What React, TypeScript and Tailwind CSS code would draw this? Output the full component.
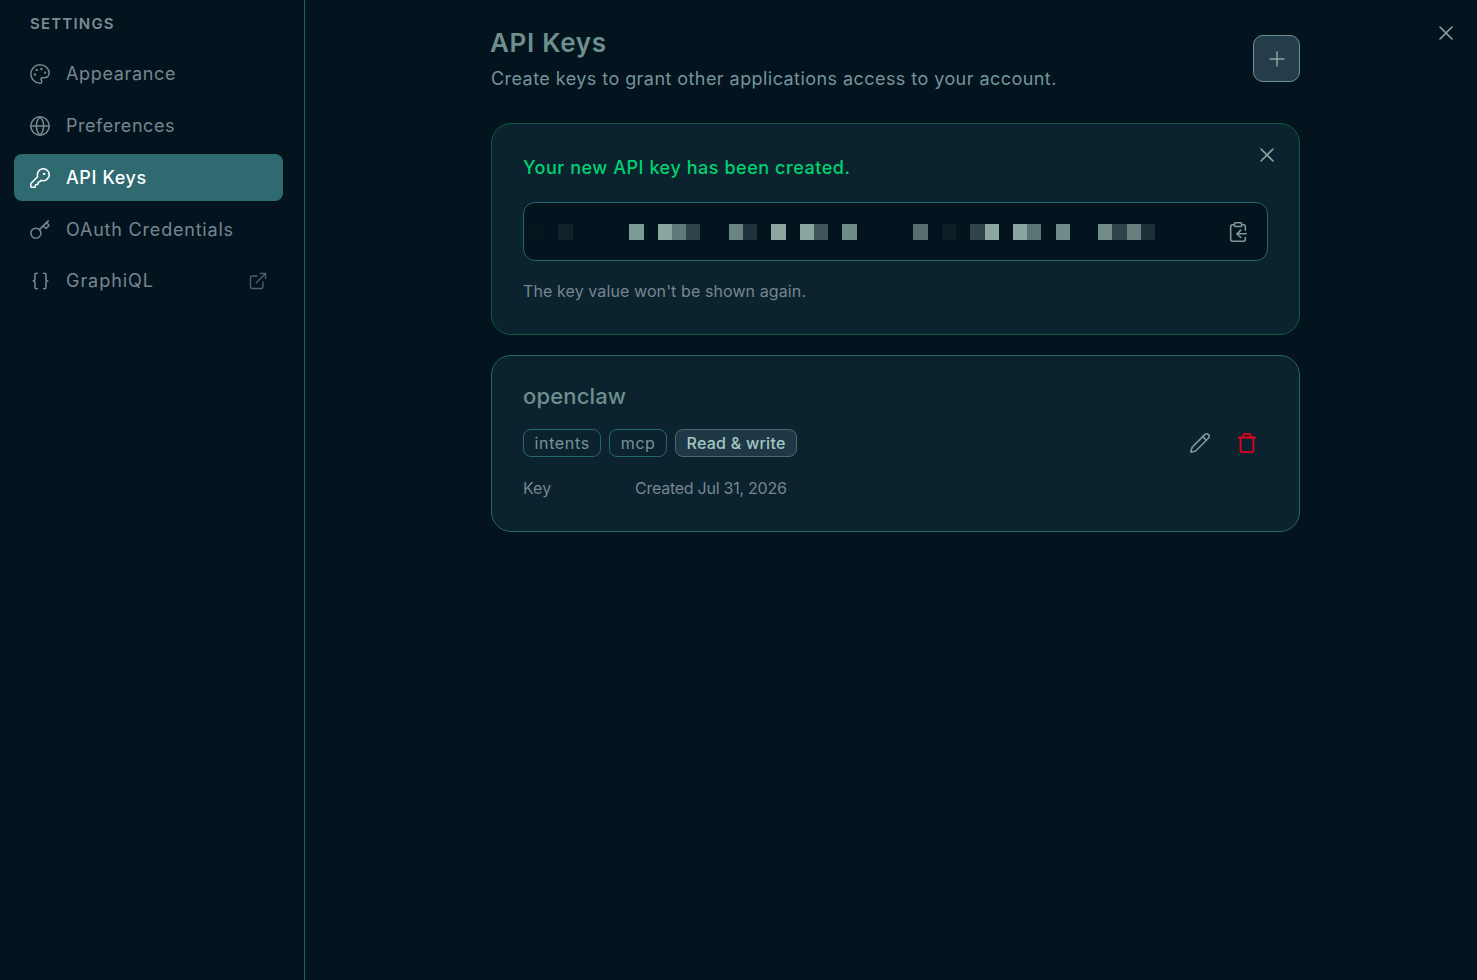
import { Palette, Globe, KeyRound, Key, ExternalLink, Plus, X, ClipboardCopy, Pencil, Trash } from "lucide-react";

const NAV_ITEMS = [
  { label: "Appearance", icon: Palette, spacing: "tracking-[0.65px]" },
  { label: "Preferences", icon: Globe, spacing: "tracking-[0.55px]" },
  { label: "API Keys", icon: KeyRound, active: true, spacing: "tracking-[0.6px]" },
  { label: "OAuth Credentials", icon: Key, spacing: "tracking-[0.8px]" },
];

// pixelated key value, one colour per character cell
const KEY_CELLS = [
  "#06151e", "", "#11222a", "", "", "", "", "#7d9a96", "", "#8aa5a0", "#5f7878", "#2e434a", "", "",
  "#6b8483", "#1f323a", "", "#8ca6a1", "", "#8aa5a0", "#3f565a", "", "#708a87", "", "", "", "",
  "#566e70", "", "#0e1e26", "", "#2e434a", "#8ca6a1", "", "#8aa5a0", "#5a7373", "", "#708a87", "", "",
  "#728d89", "#2e434a", "#668080", "#1d2f37",
];

function BracesIcon() {
  return (
    <svg viewBox="0 0 24 24" className="w-[22px] h-[22px] shrink-0" fill="none" stroke="currentColor" strokeWidth={1.7} strokeLinecap="round" strokeLinejoin="round">
      <path d="M9 3.5H8A1.5 1.5 0 0 0 6.5 5v5a2 2 0 0 1-2 2 2 2 0 0 1 2 2v5A1.5 1.5 0 0 0 8 20.5h1" />
      <path d="M16 3.5h1A1.5 1.5 0 0 1 18.5 5v5a2 2 0 0 0 2 2 2 2 0 0 0-2 2v5a1.5 1.5 0 0 1-1.5 1.5h-1" />
    </svg>
  );
}

function SideBar() {
  return (
    <aside className="w-[305px] shrink-0 border-r border-[#1f5f69] h-full pt-[15px] pl-[14px] pr-[21px]">
      <h3 className="pl-4 text-[15px] leading-[18px] font-semibold tracking-[1.2px] text-[#7b8b94] uppercase">
        Settings
      </h3>
      <nav className="mt-[17px] flex flex-col gap-[5px]">
        {NAV_ITEMS.map((item) => {
          const Icon = item.icon;
          return (
            <div
              key={item.label}
              className={`h-[47px] flex items-center gap-[15px] pl-[15px] rounded-lg text-lg ${item.spacing} ${
                item.active ? "bg-[#2f6a71] text-white font-medium" : "text-[#76868f]"
              }`}
            >
              <Icon className="w-[22px] h-[22px]" strokeWidth={1.7} />
              <span>{item.label}</span>
            </div>
          );
        })}
        <div className="h-[46px] flex items-center gap-[15px] pl-[15px] pr-[15px] text-lg tracking-[0.95px] text-[#76868f]">
          <BracesIcon />
          <span>GraphiQL</span>
          <ExternalLink className="w-5 h-5 ml-auto text-[#4f626c]" strokeWidth={1.6} />
        </div>
      </nav>
    </aside>
  );
}

function NewKeyCard() {
  return (
    <section className="relative h-[212px] rounded-[20px] border border-[#0d5a3f] bg-[#0b222f] px-[31px] pt-[31px]">
      <button className="absolute right-[20px] top-[19px] text-[#8aa5a0]">
        <X className="w-6 h-6" strokeWidth={1.6} />
      </button>
      <p className="text-lg leading-[26px] font-medium tracking-[0.55px] text-[#00d36f]">
        Your new API key has been created.
      </p>
      <div className="mt-[21px] h-[59px] rounded-xl border border-[#24666d] bg-[#03141f] flex items-center pl-[6px] pr-[18px]">
        <div className="flex h-4">
          {KEY_CELLS.map((color, i) => (
            <span key={i} className="w-[14.21px] h-4" style={{ backgroundColor: color || "transparent" }} />
          ))}
        </div>
        <ClipboardCopy className="ml-auto w-[22px] h-[22px] text-[#7d9a96]" strokeWidth={1.7} />
      </div>
      <p className="mt-[20px] text-base leading-[20px] tracking-[0.1px] text-[#76868f]">
        The key value won't be shown again.
      </p>
    </section>
  );
}

function KeyRow() {
  return (
    <section className="relative h-[177px] rounded-[20px] border border-[#24666d] bg-[#0b222f] px-[31px] pt-[26px]">
      <h2 className="text-[22px] leading-[28px] font-medium tracking-[0.15px] text-[#6f8f8d]">openclaw</h2>
      <div className="mt-[19px] flex gap-2 text-base">
        <span className="h-7 px-[10.5px] flex items-center rounded-lg border border-[#24666d] tracking-[0.65px] text-[#76939a]">intents</span>
        <span className="h-7 px-[10.5px] flex items-center rounded-lg border border-[#24666d] tracking-[0.6px] text-[#76939a]">mcp</span>
        <span className="h-7 px-[10.5px] flex items-center rounded-lg border border-[#4a6a72] bg-[#1e3945] font-medium tracking-[0.25px] text-[#a5c5c5]">
          Read &amp; write
        </span>
      </div>
      <div className="mt-[21px] flex text-base leading-[20px] text-[#76868f]">
        <span className="w-[112px]">Key</span>
        <span className="tracking-[-0.25px]">Created Jul 31, 2026</span>
      </div>
      <div className="absolute right-[41px] top-[76px] flex items-center gap-[25px]">
        <Pencil className="w-[22px] h-[22px] text-[#7d9a96]" strokeWidth={1.7} />
        <Trash className="w-[22px] h-[22px] text-[#e5001f]" strokeWidth={2} />
      </div>
    </section>
  );
}

export default function App() {
  return (
    <div className="relative h-[980px] flex bg-[#03141f] overflow-hidden font-['Inter','Liberation_Sans',sans-serif]">
      <SideBar />
      <main className="flex-1 pl-[186px]">
        <div className="w-[809px]">
          <div className="h-[123px] flex items-start justify-between pt-[26px]">
            <div>
              <h1 className="-ml-px text-[26px] leading-[34px] font-semibold tracking-[0.7px] text-[#6f8f8d]">API Keys</h1>
              <p className="mt-[2px] text-lg leading-[34px] tracking-[0.44px] text-[#76939a]">
                Create keys to grant other applications access to your account.
              </p>
            </div>
            <button className="mt-[9px] w-[47px] h-[47px] rounded-[10px] border border-[#6b929c] bg-[#253d4b] flex items-center justify-center text-[#8aa5a0]">
              <Plus className="w-6 h-6" strokeWidth={1.5} />
            </button>
          </div>
          <div className="flex flex-col gap-5">
            <NewKeyCard />
            <KeyRow />
          </div>
        </div>
      </main>
      <button className="absolute right-[19px] top-[21px] text-[#8aa5a0]">
        <X className="w-6 h-6" strokeWidth={1.6} />
      </button>
    </div>
  );
}
